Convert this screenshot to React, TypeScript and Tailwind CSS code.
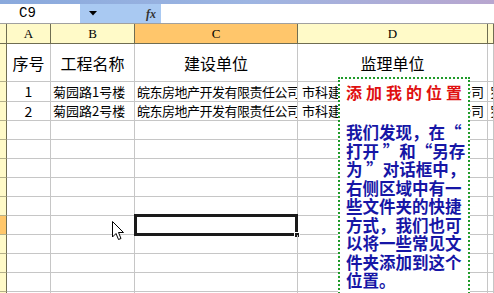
import React from "react";

const cjk = "font-['Noto_Sans_CJK_SC',sans-serif]";

// column widths: row header, A, B, C, D, E
const W = [7, 44, 84, 163, 190, 6];

const dataRows: { h: number; cells: string[] }[] = [
  { h: 38, cells: ["序号", "工程名称", "建设单位", "监理单位", ""] },
  { h: 20, cells: ["1", "菊园路1号楼", "皖东房地产开发有限责任公司", "市科建设工程监理咨询有限公司", "罗"] },
  { h: 19, cells: ["2", "菊园路2号楼", "皖东房地产开发有限责任公司", "市科建设工程监理咨询有限公司", "罗"] },
];

function RowHead({ h, active }: { h: number; active?: boolean }) {
  return (
    <div
      className={`shrink-0 border-r border-b border-r-[#6f6d52] border-b-[#b5b18a] ${active ? "bg-[#ffc76a]" : "bg-[#fffac8]"}`}
      style={{ width: W[0], height: h }}
    />
  );
}

function Cell({ w, h, children, center, className = "" }: { w: number; h: number; children?: React.ReactNode; center?: boolean; className?: string }) {
  return (
    <div
      className={`shrink-0 border-r border-b border-[#c6c6c6] flex items-center overflow-hidden whitespace-nowrap text-[13px] text-black ${center ? "justify-center" : "pl-[2px]"} ${className}`}
      style={{ width: w, height: h }}
    >
      {children}
    </div>
  );
}

function Cursor() {
  return (
    <svg className="absolute left-[112px] top-[221px]" width="13" height="21" viewBox="0 0 13 21">
      <path d="M0.5 0.5 L0.5 16 L4 12.5 L6.5 18.5 L9 17.5 L6.5 11.5 L11.5 11.5 Z" fill="#fff" stroke="#000" strokeWidth="1" />
    </svg>
  );
}

export default function App() {
  const blank = Array.from({ length: 12 });
  return (
    <div className={`relative w-[494px] h-[293px] overflow-hidden bg-white ${cjk}`}>
      {/* title bar remnant */}
      <div className="h-[4px] bg-gradient-to-r from-[#8aa9dc] via-[#9db5e2] to-[#b8a6cf]" />

      {/* formula bar */}
      <div className="flex h-[20px] border-b border-[#a0a0a0]">
        <div className="w-[80px] flex items-center pl-[19px] text-[14px] font-['Liberation_Mono',monospace] text-black">C9</div>
        <div className="w-[81px] bg-[#a9c9f2] flex items-center justify-between pl-[9px] pr-[5px]">
          <svg width="8" height="5" viewBox="0 0 8 5"><path d="M0 0 H8 L4 4.5 Z" fill="#000" /></svg>
          <span className="font-['Liberation_Serif',serif] italic font-bold text-[12px] text-[#333]">fx</span>
        </div>
        <div className="flex-1 bg-white" />
      </div>

      {/* column headers */}
      <div className="flex h-[20px]">
        <div className="shrink-0 bg-[#fffac8] border-r border-b border-[#6f6d52]" style={{ width: W[0] }} />
        {["A", "B", "C", "D", ""].map((l, i) => (
          <div
            key={i}
            className={`shrink-0 border-r border-b border-[#6f6d52] flex items-center justify-center text-[13px] font-['Liberation_Serif',serif] text-black ${l === "C" ? "bg-[#ffc66b]" : "bg-[#fffac8]"}`}
            style={{ width: W[i + 1] }}
          >
            {l}
          </div>
        ))}
      </div>

      {/* data rows */}
      {dataRows.map((r, ri) => (
        <div key={ri} className="flex">
          <RowHead h={r.h} />
          <Cell w={W[1]} h={r.h} center className={ri === 0 ? "text-[16px]" : "text-[14px]"}>{r.cells[0]}</Cell>
          <Cell w={W[2]} h={r.h} center={ri === 0} className={ri === 0 ? "text-[16px]" : "text-[13.5px]"}>{r.cells[1]}</Cell>
          <Cell w={W[3]} h={r.h} center={ri === 0} className={ri === 0 ? "text-[16px]" : "text-[12px] tracking-[-0.5px]"}>{r.cells[2]}</Cell>
          <Cell w={W[4]} h={r.h} center={ri === 0} className={ri === 0 ? "text-[16px]" : "text-[13px] pl-[4px]"}>{r.cells[3]}</Cell>
          <Cell w={W[5]} h={r.h}>{r.cells[4]}</Cell>
        </div>
      ))}
      {blank.map((_, i) => (
        <div key={i} className="flex">
          <RowHead h={19} active={i === 5} />
          <Cell w={W[1]} h={19} />
          <Cell w={W[2]} h={19} />
          <div className="relative shrink-0">
            <Cell w={W[3]} h={19} />
            {i === 5 && (
              <>
                <div className="absolute left-[-1px] top-[-2px] w-[164px] h-[22px] border-[3px] border-[#1a1a1a]" />
                <div className="absolute left-[159px] top-[16px] w-[6px] h-[6px] bg-[#1a1a1a] border border-white" />
              </>
            )}
          </div>
          <Cell w={W[4]} h={19} />
          <Cell w={W[5]} h={19} />
        </div>
      ))}

      {/* text box overlay */}
      <div className="absolute left-[338px] top-[77px] w-[132px] h-[260px] bg-white border-[2px] border-dotted border-[#1f9a2a] px-[6px] pt-[4px]">
        <div className="text-[16px] leading-[18px] font-bold text-[#e01010] tracking-[4px] whitespace-nowrap">添加我的位置</div>
        <div className="mt-[22px] text-[16.5px] leading-[18.5px] font-bold text-[#1616a6] whitespace-pre">
          {"我们发现，在“\n打开 ”和“另存\n为 ”对话框中，\n右侧区域中有一\n些文件夹的快捷\n方式，我们也可\n以将一些常见文\n件夹添加到这个\n位置。"}
        </div>
      </div>

      <Cursor />
    </div>
  );
}
